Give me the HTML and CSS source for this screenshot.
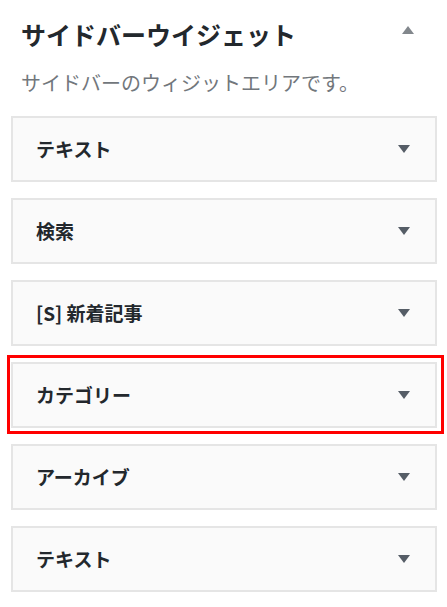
FILE: index.html
```html
<!DOCTYPE html>
<html lang="ja">
<head>
    <meta charset="UTF-8">
    <meta name="viewport" content="width=device-width, initial-scale=1.0">
    <title>サイドバーウイジェット</title>
    <link rel="stylesheet" href="styles.css">
</head>
<body>
    <div class="sidebar-area">
        <div class="area-header">
            <h2>サイドバーウイジェット</h2>
            <span class="toggle toggle-up">
                <svg viewBox="0 0 12 8"><path d="M0 8L6 0l6 8z"/></svg>
            </span>
        </div>
        <p class="description">サイドバーのウィジットエリアです。</p>

        <div class="widget-list">
            <div class="widget">
                <h3>テキスト</h3>
                <span class="toggle"><svg viewBox="0 0 12 8"><path d="M0 0h12L6 8z"/></svg></span>
            </div>
            <div class="widget">
                <h3>検索</h3>
                <span class="toggle"><svg viewBox="0 0 12 8"><path d="M0 0h12L6 8z"/></svg></span>
            </div>
            <div class="widget">
                <h3>[S] 新着記事</h3>
                <span class="toggle"><svg viewBox="0 0 12 8"><path d="M0 0h12L6 8z"/></svg></span>
            </div>
            <div class="widget highlighted">
                <h3>カテゴリー</h3>
                <span class="toggle"><svg viewBox="0 0 12 8"><path d="M0 0h12L6 8z"/></svg></span>
            </div>
            <div class="widget">
                <h3>アーカイブ</h3>
                <span class="toggle"><svg viewBox="0 0 12 8"><path d="M0 0h12L6 8z"/></svg></span>
            </div>
            <div class="widget">
                <h3>テキスト</h3>
                <span class="toggle"><svg viewBox="0 0 12 8"><path d="M0 0h12L6 8z"/></svg></span>
            </div>
        </div>
    </div>
</body>
</html>
```

FILE: styles.css
```css
* {
    margin: 0;
    padding: 0;
    box-sizing: border-box;
}

body {
    font-family: "Noto Sans CJK JP", "Noto Sans", sans-serif;
    background: #fff;
    color: #23282d;
}

.sidebar-area {
    padding: 18px 10px 0 11px;
}

.area-header {
    display: flex;
    align-items: flex-start;
    justify-content: space-between;
    padding: 0 23px 0 10px;
}

.area-header h2 {
    font-size: 25px;
    font-weight: 700;
    line-height: 32px;
    color: #23282d;
}

.toggle svg {
    display: block;
    width: 12px;
    height: 8px;
    fill: #555d66;
}

.toggle-up {
    margin-top: 8px;
}

.toggle-up svg {
    fill: #82878c;
}

.description {
    margin: 19px 0 19px 10px;
    font-size: 20px;
    line-height: 28px;
    color: #72777c;
}

.widget-list {
    display: flex;
    flex-direction: column;
    gap: 16px;
}

.widget {
    position: relative;
    height: 66px;
    display: flex;
    align-items: center;
    justify-content: space-between;
    padding: 0 25px 0 23px;
    background: #fafafa;
    border: 2px solid #e5e5e5;
}

.widget h3 {
    font-size: 19px;
    font-weight: 700;
    line-height: 26px;
}

.highlighted::after {
    content: "";
    position: absolute;
    top: -9px;
    left: -6px;
    right: -9px;
    bottom: -8px;
    border: 3px solid #f00;
}
```
